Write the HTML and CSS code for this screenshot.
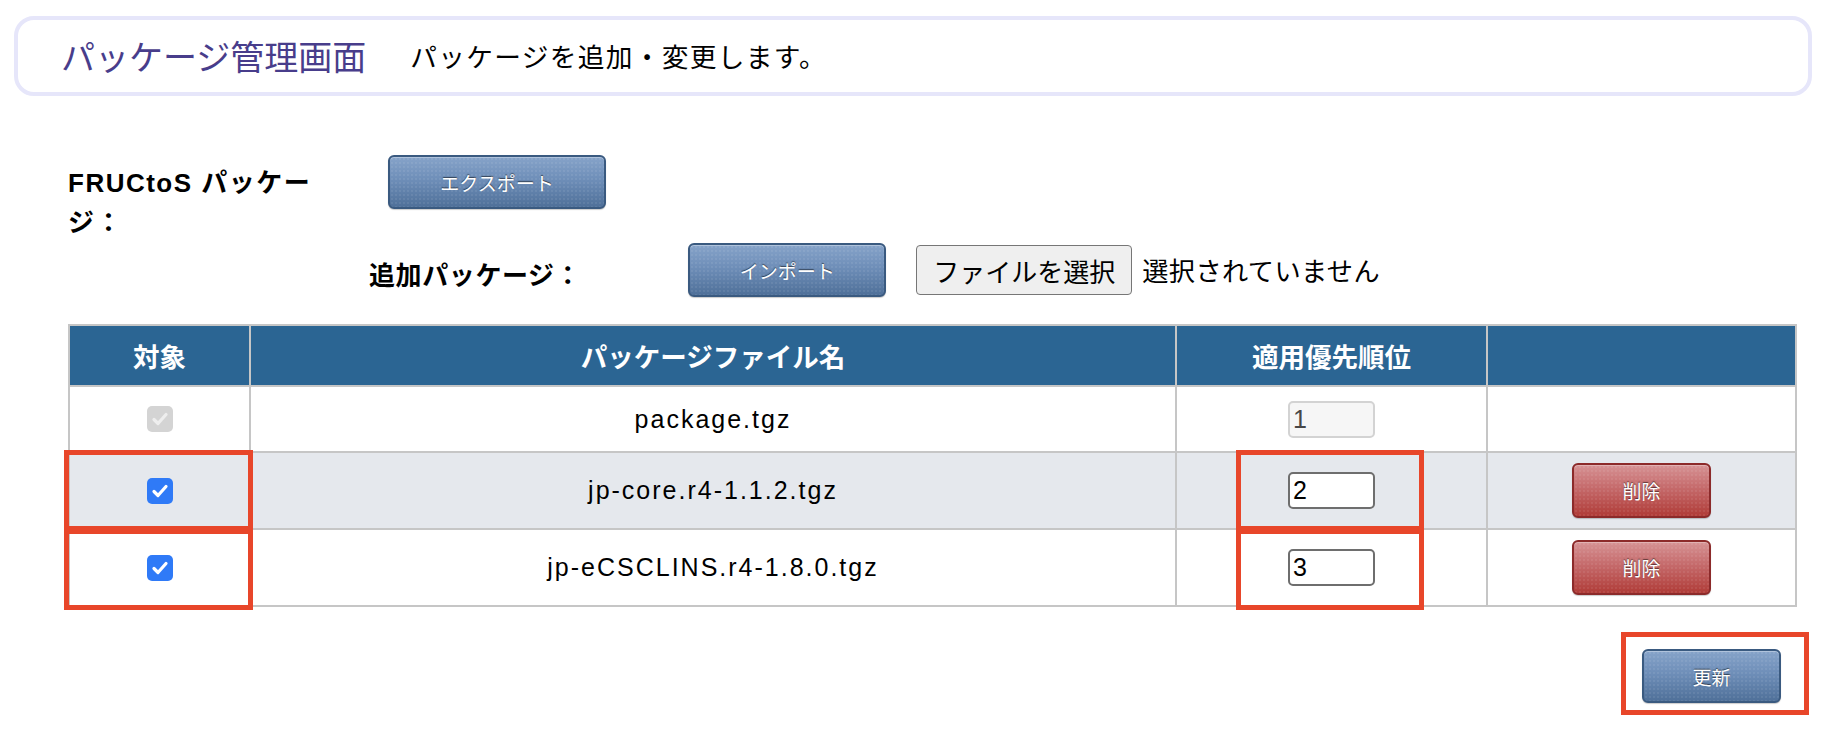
FILE: index.html
```html
<!DOCTYPE html>
<html lang="ja">
<head>
<meta charset="utf-8">
<title>パッケージ管理画面</title>
<link rel="stylesheet" href="styles.css">
</head>
<body>
<header class="page-header">
  <h1 class="title">パッケージ管理画面</h1>
  <p class="subtitle">パッケージを追加・変更します。</p>
</header>

<main class="content">
  <div class="pkg-row pkg-row-export">
    <div class="pkg-label pkg-label-fructos">FRUCtoS パッケージ：</div>
    <button class="btn btn-blue btn-export">エクスポート</button>
  </div>
  <div class="pkg-row pkg-row-import">
    <div class="pkg-label pkg-label-add">追加パッケージ：</div>
    <button class="btn btn-blue btn-import">インポート</button>
    <button class="file-btn">ファイルを選択</button>
    <span class="file-status">選択されていません</span>
  </div>

  <table class="pkg-table">
    <thead>
      <tr>
        <th class="col-target">対象</th>
        <th class="col-name">パッケージファイル名</th>
        <th class="col-prio">適用優先順位</th>
        <th class="col-action"></th>
      </tr>
    </thead>
    <tbody>
      <tr class="row-short">
        <td><span class="check check-disabled"><svg viewBox="0 0 26 26" width="26" height="26"><path d="M7 13.5 L11 17.5 L19 8.5" fill="none" stroke="#eeeeee" stroke-width="3.2" stroke-linecap="round" stroke-linejoin="round"/></svg></span></td>
        <td class="fname">package.tgz</td>
        <td><input class="prio prio-disabled" type="text" value="1" disabled></td>
        <td></td>
      </tr>
      <tr class="row-tall row-alt">
        <td><span class="check"><svg viewBox="0 0 26 26" width="26" height="26"><path d="M7 13.5 L11 17.5 L19 8.5" fill="none" stroke="#ffffff" stroke-width="3.2" stroke-linecap="round" stroke-linejoin="round"/></svg></span></td>
        <td class="fname">jp-core.r4-1.1.2.tgz</td>
        <td><input class="prio" type="text" value="2"></td>
        <td><button class="btn btn-red">削除</button></td>
      </tr>
      <tr class="row-tall">
        <td><span class="check"><svg viewBox="0 0 26 26" width="26" height="26"><path d="M7 13.5 L11 17.5 L19 8.5" fill="none" stroke="#ffffff" stroke-width="3.2" stroke-linecap="round" stroke-linejoin="round"/></svg></span></td>
        <td class="fname">jp-eCSCLINS.r4-1.8.0.tgz</td>
        <td><input class="prio" type="text" value="3"></td>
        <td><button class="btn btn-red">削除</button></td>
      </tr>
    </tbody>
  </table>

  <div class="actions">
    <button class="btn btn-blue btn-update">更新</button>
  </div>
</main>

<div class="mark mark-a"></div>
<div class="mark mark-b"></div>
<div class="mark mark-c"></div>
<div class="mark mark-d"></div>
<div class="mark mark-e"></div>
</body>
</html>
```

FILE: styles.css
```css
html, body {
  margin: 0;
  padding: 0;
  background: #ffffff;
}

body {
  position: relative;
  width: 1840px;
  height: 752px;
  overflow: hidden;
  font-family: "Liberation Sans", "Noto Sans CJK JP", sans-serif;
  color: #000000;
}

.page-header {
  box-sizing: border-box;
  margin: 16px 28px 0 14px;
  height: 80px;
  border: 4px solid #e6e6fa;
  border-radius: 20px;
  display: flex;
  align-items: center;
  padding-left: 43px;
}

.title {
  margin: 0;
  font-family: "Noto Sans CJK JP", sans-serif;
  font-weight: 400;
  font-size: 34px;
  line-height: 1;
  color: #483d8b;
}

.subtitle {
  margin: 0 0 0 44px;
  font-family: "Noto Sans CJK JP", sans-serif;
  font-size: 26.7px;
  letter-spacing: 1.3px;
  line-height: 1;
  color: #000000;
}

.content {
  margin: 59px 0 0 68px;
  width: 1729px;
}

.pkg-row {
  display: flex;
}

.pkg-row-export {
  align-items: flex-start;
  height: 88px;
}

.pkg-row-import {
  align-items: center;
  height: 54px;
}

.pkg-label {
  font-weight: 700;
  font-family: "Noto Sans CJK JP", sans-serif;
  font-size: 26px;
}

.pkg-label-fructos {
  width: 255px;
  padding-top: 8px;
  line-height: 40px;
  font-family: "Liberation Sans", "Noto Sans CJK JP", sans-serif;
  letter-spacing: 1.5px;
}

.pkg-label-add {
  margin-left: 301px;
  padding-top: 8px;
  line-height: 30px;
  letter-spacing: 0.6px;
}

.btn {
  box-sizing: border-box;
  font-family: "Noto Sans CJK JP", sans-serif;
  font-size: 19px;
  color: #ffffff;
  text-shadow: 0 -1px 1px rgba(0, 0, 0, 0.55);
  border-radius: 6px;
  padding: 0;
  cursor: pointer;
}

.btn-blue {
  border: 2px solid #3a5a80;
  background-color: #6686b0;
  background-image:
    radial-gradient(circle, rgba(255, 255, 255, 0.07) 0.9px, transparent 1.3px),
    linear-gradient(#86a3c9, #6e8eb8 45%, #4f7099);
  background-size: 4px 4px, 100% 100%;
  box-shadow: inset 0 1px 0 rgba(255, 255, 255, 0.35), 0 1px 1px rgba(0, 0, 0, 0.2);
}

.btn-red {
  width: 139px;
  height: 55px;
  border: 2px solid #8c2a2a;
  background-color: #c26262;
  background-image:
    radial-gradient(circle, rgba(255, 255, 255, 0.07) 0.9px, transparent 1.3px),
    linear-gradient(#d69294, #c56a6b 45%, #b03c38);
  background-size: 4px 4px, 100% 100%;
  box-shadow: inset 0 1px 0 rgba(255, 255, 255, 0.3), 0 1px 1px rgba(0, 0, 0, 0.2);
}

.btn-export {
  margin-left: 65px;
  width: 218px;
  height: 54px;
}

.btn-import {
  margin-left: 107px;
  width: 198px;
  height: 54px;
}

.btn-update {
  width: 139px;
  height: 54px;
}

.file-btn {
  box-sizing: border-box;
  margin-left: 30px;
  width: 216px;
  height: 50px;
  padding: 0;
  font-family: "Noto Sans CJK JP", sans-serif;
  font-size: 26px;
  color: #000000;
  background: #efefef;
  border: 1px solid #767676;
  border-radius: 4px;
}

.file-status {
  margin-left: 10px;
  font-family: "Noto Sans CJK JP", sans-serif;
  font-size: 26.2px;
  letter-spacing: 0.4px;
}

.pkg-table {
  margin-top: 27px;
  width: 1729px;
  table-layout: fixed;
  border-collapse: separate;
  border-spacing: 0;
  border-top: 2px solid #c6c6c6;
  border-left: 2px solid #c6c6c6;
}

.pkg-table th,
.pkg-table td {
  box-sizing: border-box;
  border-right: 2px solid #c6c6c6;
  border-bottom: 2px solid #c6c6c6;
  padding: 0;
  text-align: center;
  vertical-align: middle;
}

.pkg-table th {
  height: 61px;
  background: #2b6593;
  color: #ffffff;
  font-family: "Noto Sans CJK JP", sans-serif;
  font-weight: 700;
  font-size: 26.5px;
}

.col-target { width: 181px; }
.col-name { width: 926px; }
.col-prio { width: 311px; }
.col-action { width: 309px; }

.row-short td { height: 66px; }
.row-tall td { height: 77px; }
.row-alt td { background: #e5e8ed; }

.fname {
  font-size: 25px;
  letter-spacing: 2px;
}

.check {
  display: inline-block;
  width: 26px;
  height: 26px;
  border-radius: 5px;
  background: #2f7af7;
  vertical-align: middle;
}

.check svg {
  display: block;
}

.check-disabled {
  background: #d4d4d4;
}

.prio {
  box-sizing: border-box;
  width: 87px;
  height: 37px;
  padding: 0 3px;
  margin: 0;
  border: 2px solid #6e6e6e;
  border-radius: 5px;
  background: #ffffff;
  font-family: "Liberation Sans", sans-serif;
  font-size: 25px;
  color: #000000;
  vertical-align: middle;
}

.prio-disabled {
  border-color: #d3d3d3;
  background: #f6f6f6;
  color: #474747;
}

.actions {
  display: flex;
  justify-content: flex-end;
  padding-right: 16px;
  margin-top: 42px;
}

.mark {
  position: absolute;
  box-sizing: border-box;
  border: 5px solid #e8462a;
}

.mark-a { left: 64px; top: 450px; width: 189px; height: 81px; }
.mark-b { left: 64px; top: 529px; width: 189px; height: 81px; }
.mark-c { left: 1236px; top: 450px; width: 188px; height: 81px; }
.mark-d { left: 1236px; top: 529px; width: 188px; height: 81px; }
.mark-e { left: 1621px; top: 632px; width: 188px; height: 83px; }
```
